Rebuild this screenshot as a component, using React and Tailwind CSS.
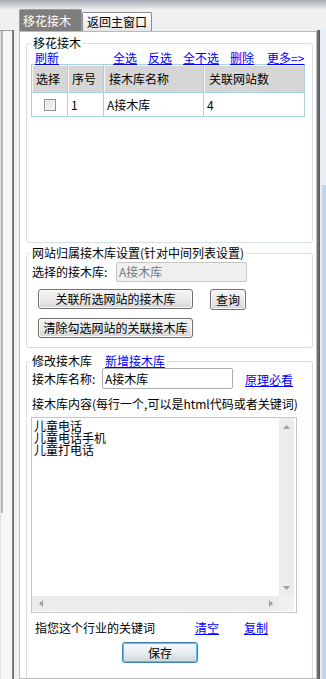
import React from "react";

function WinButton({ children, className }) {
  return (
    <button
      className={`flex items-center justify-center rounded-[3px] border border-[#707070] bg-gradient-to-b from-[#f3f3f3] via-[#ebebeb] to-[#d5d5d5] text-[12px] leading-[12px] text-black shadow-[inset_0_0_0_1px_#fcfcfc] ${className}`}
    >
      {children}
    </button>
  );
}

function Link({ children, className }) {
  return <span className={`text-[#0000ff] underline underline-offset-[1px] ${className}`}>{children}</span>;
}

function Arrow({ dir }) {
  const pts = {
    up: "0,4 3.5,0 7,4",
    down: "0,0 3.5,4 7,0",
    left: "4,0 0,3.5 4,7",
    right: "0,0 4,3.5 0,7",
  };
  const vertical = dir === "up" || dir === "down";
  return (
    <svg width={vertical ? 7 : 4} height={vertical ? 4 : 7}>
      <polygon points={pts[dir]} fill="#a0a0a0" />
    </svg>
  );
}

export default function App() {
  return (
    <div className="w-[326px] h-[679px] overflow-hidden bg-[#f0f0f0] flex flex-col font-['Noto_Sans_CJK_SC',sans-serif] text-[12px] leading-[12px] text-black">
      {/* top edge */}
      <div className="h-[9px] shrink-0 bg-gradient-to-b from-[#a3abb3] to-[#e9eaeb]" />

      <div className="flex flex-1 min-h-0">
        {/* left docked panel */}
        <div className="w-[12px] flex flex-col">
          <div className="h-[21px] shrink-0" />
          <div className="flex-1 border-t border-[#a0a0a0] bg-[#f6f6f6] flex">
            <div className="w-[1px] bg-[#e2e2e2]" />
            <div className="w-[2px] h-[482px] bg-gradient-to-r from-[#a8a8a8] to-[#c8c8c8]" />
          </div>
        </div>
        <div className="w-[2px] flex flex-col">
          <div className="h-[21px] shrink-0" />
          <div className="flex-1 bg-gradient-to-r from-[#8a8a8a] to-[#696969]" />
        </div>
        <div className="w-[5px]" />

        {/* tab control */}
        <div className="w-[298px] flex flex-col">
          <div className="h-[22px] shrink-0 flex items-end">
            <div className="w-[63px] h-[22px] rounded-t-[2px] border border-b-0 border-[#9c9c9c] bg-[#7e7e7e] text-white flex items-center pl-[3px]">
              移花接木
            </div>
            <div className="w-[70px] h-[19px] rounded-t-[2px] border border-b-0 border-[#898c95] bg-gradient-to-b from-white to-[#e6e6e6] flex items-center justify-center">
              返回主窗口
            </div>
          </div>

          <div className="flex-1 border border-[#b9b9b9] bg-white pl-[6px] pr-[3px] flex flex-col">
            {/* group 1 */}
            <fieldset className="mt-[5px] h-[206px] rounded-[3px] border border-[#d5dfe5]">
              <legend className="ml-[4px] px-[2px] leading-[12px]">移花接木</legend>
              <div className="mt-[3px] h-[12px] flex pl-[8px]">
                <Link>刷新</Link>
                <Link className="ml-[54px]">全选</Link>
                <Link className="ml-[11px]">反选</Link>
                <Link className="ml-[11px]">全不选</Link>
                <Link className="ml-[11px]">删除</Link>
                <Link className="ml-[13px]">更多=&gt;</Link>
              </div>
              <div className="ml-[4px] w-[274px] border border-[#a9d3de]">
                <div className="flex h-[28px] bg-[#d6d6d6] border-b border-[#a9d3de]">
                  <div className="w-[36px] border-r border-[#a9d3de] flex items-center pl-[4px] shadow-[inset_1px_1px_0_#f4f4f4]">选择</div>
                  <div className="w-[36px] border-r border-[#a9d3de] flex items-center pl-[4px] shadow-[inset_1px_1px_0_#f4f4f4]">序号</div>
                  <div className="w-[100px] border-r border-[#a9d3de] flex items-center pl-[5px] shadow-[inset_1px_1px_0_#f4f4f4]">接木库名称</div>
                  <div className="w-[100px] flex items-center pl-[5px] shadow-[inset_1px_1px_0_#f4f4f4]">关联网站数</div>
                </div>
                <div className="flex h-[23px]">
                  <div className="w-[36px] border-r border-[#a9d3de] flex items-center justify-center">
                    <div className="w-[12px] h-[12px] border border-[#8f8f8f] bg-gradient-to-br from-[#dcdcdc] to-[#fafafa] shadow-[inset_0_0_0_1px_#f4f4f4]" />
                  </div>
                  <div className="w-[36px] border-r border-[#a9d3de] flex items-center pl-[3px]">1</div>
                  <div className="w-[100px] border-r border-[#a9d3de] flex items-center pl-[3px]">A接木库</div>
                  <div className="w-[100px] flex items-center pl-[3px]">4</div>
                </div>
              </div>
            </fieldset>

            {/* group 2 */}
            <fieldset className="mt-[4px] h-[101px] rounded-[3px] border border-[#d5dfe5]">
              <legend className="ml-[3px] px-[2px] leading-[12px]">网站归属接木库设置(针对中间列表设置)</legend>
              <div className="mt-[3px] flex h-[20px] items-center pl-[5px]">
                <span className="w-[84px]">选择的接木库:</span>
                <div className="w-[131px] h-[20px] rounded-[2px] border border-[#c4c4c4] bg-[#f0f0f0] flex items-center pl-[2px] text-[#7a7a7a]">
                  A接木库
                </div>
              </div>
              <div className="mt-[7px] flex items-start">
                <WinButton className="ml-[11px] w-[155px] h-[20px]">关联所选网站的接木库</WinButton>
                <WinButton className="ml-[17px] w-[36px] h-[21px]">查询</WinButton>
              </div>
              <WinButton className="mt-[8px] ml-[11px] w-[155px] h-[20px]">清除勾选网站的关联接木库</WinButton>
            </fieldset>

            {/* group 3 */}
            <fieldset className="mt-[7px] flex-1 rounded-t-[3px] border border-b-0 border-[#d5dfe5]">
              <legend className="ml-[3px] px-[2px] leading-[12px]">
                修改接木库<Link className="ml-[13px]">新增接木库</Link>
              </legend>
              <div className="mt-[1px] flex h-[21px] items-center pl-[5px]">
                <span className="w-[70px]">接木库名称:</span>
                <div className="w-[131px] h-[21px] rounded-[2px] border border-[#abadb3] bg-white flex items-center pl-[2px]">
                  A接木库
                </div>
                <Link className="ml-[12px] mt-[2px]">原理必看</Link>
              </div>
              <div className="mt-[9px] pl-[5px] leading-[12px]">接木库内容(每行一个,可以是html代码或者关键词)</div>

              <div className="mt-[7px] ml-[4px] w-[266px] h-[196px] border border-[#c2c6cc] flex flex-col pr-[2px] pb-[1px]">
                <div className="flex flex-1 min-h-0">
                  <div className="flex-1 pt-[2px] pl-[2px] leading-[12px]">
                    <div>儿童电话</div>
                    <div>儿童电话手机</div>
                    <div>儿童打电话</div>
                  </div>
                  <div className="w-[15px] bg-[#ececec] flex flex-col justify-between">
                    <div className="h-[17px] flex items-center justify-center"><Arrow dir="up" /></div>
                    <div className="h-[17px] flex items-center justify-center"><Arrow dir="down" /></div>
                  </div>
                </div>
                <div className="h-[15px] flex">
                  <div className="flex-1 bg-[#ececec] flex justify-between">
                    <div className="w-[17px] flex items-center justify-center"><Arrow dir="left" /></div>
                    <div className="w-[17px] flex items-center justify-center"><Arrow dir="right" /></div>
                  </div>
                  <div className="w-[15px] bg-[#f0f0f0]" />
                </div>
              </div>

              <div className="mt-[9px] h-[12px] flex pl-[8px]">
                <span>指您这个行业的关键词</span>
                <Link className="ml-[40px]">清空</Link>
                <Link className="ml-[25px]">复制</Link>
              </div>
              <button className="mt-[8px] ml-[95px] w-[76px] h-[21px] rounded-[3px] border border-[#3c7fb1] bg-gradient-to-b from-[#f2f8fc] via-[#e8eef2] to-[#cfd6da] shadow-[inset_0_0_0_1px_#48c9fa] flex items-center justify-center text-[12px] leading-[12px]">
                保存
              </button>
            </fieldset>
          </div>
        </div>

        {/* right edge */}
        <div className="w-[3px] flex flex-col">
          <div className="h-[21px] shrink-0" />
          <div className="flex-1 bg-gradient-to-r from-[#7a7a7a] to-[#575757]" />
        </div>
        <div className="w-[2px] flex flex-col">
          <div className="h-[21px] shrink-0" />
          <div className="flex-1 bg-[#ececec]" />
        </div>
        <div className="w-[4px] flex flex-col">
          <div className="h-[21px] shrink-0" />
          <div className="h-[155px] bg-[#e6eef8]" />
          <div className="flex-1 bg-[#bcd6f2]" />
        </div>
      </div>
    </div>
  );
}
